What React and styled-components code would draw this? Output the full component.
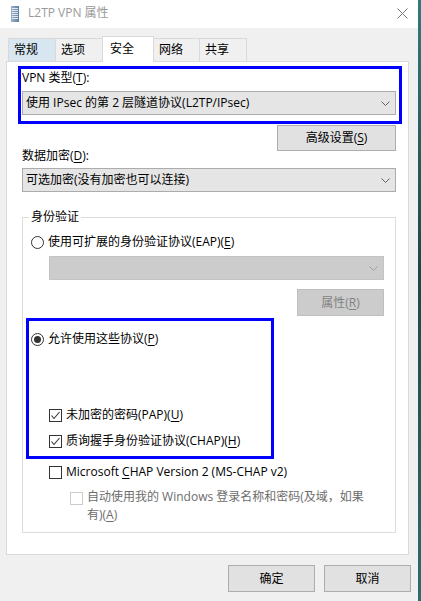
import styled, { createGlobalStyle } from "styled-components";

const GlobalStyle = createGlobalStyle`
  html, body { margin: 0; padding: 0; }
  body {
    background: linear-gradient(180deg, #2f7b7c 0%, #1c4748 45%, #2a6d6e 100%);
    font-family: "Open Sans", "Noto Sans CJK SC", sans-serif;
    font-size: 12px;
    color: #000;
  }
`;

const tabs = [
  { label: "常规", width: 48, hover: true },
  { label: "选项", width: 48 },
  { label: "安全", width: 52, active: true },
  { label: "网络", width: 47 },
  { label: "共享", width: 48 },
];

const Chevron = ({ color = "#606060" }) => (
  <svg width="9" height="5" viewBox="0 0 9 5">
    <polyline points="0.5,0.5 4.5,4.5 8.5,0.5" fill="none" stroke={color} strokeWidth="1" />
  </svg>
);

const Check = () => (
  <svg width="11" height="11" viewBox="0 0 11 11">
    <polyline points="1.5,5.5 4,8.5 9.5,2" fill="none" stroke="#333" strokeWidth="1.1" />
  </svg>
);

const App = () => {
  return (
    <>
      <GlobalStyle />
      <Window>
        <TitleBar>
          <svg width="8" height="16" viewBox="0 0 8 16">
            <defs>
              <linearGradient id="srv" x1="0" x2="1" y1="0" y2="0">
                <stop offset="0" stopColor="#9fb3cb" />
                <stop offset="1" stopColor="#5f7fa3" />
              </linearGradient>
            </defs>
            <rect x="0" y="0" width="8" height="16" fill="url(#srv)" />
            {[2, 4, 6, 8, 10, 12].map((y) => (
              <rect key={y} x="1" y={y} width="6" height="1" fill="#dfe7f0" />
            ))}
          </svg>
          <Title>L2TP VPN 属性</Title>
          <Close>
            <svg width="11" height="11" viewBox="0 0 11 11">
              <path d="M0.5 0.5 L10.5 10.5 M10.5 0.5 L0.5 10.5" stroke="#7a7a7a" strokeWidth="1" />
            </svg>
          </Close>
        </TitleBar>

        <Body>
          <TabStrip>
            {tabs.map((t) => (
              <Tab key={t.label} $width={t.width} $active={t.active} $hover={t.hover}>
                {t.label}
              </Tab>
            ))}
          </TabStrip>

          <Panel>
            <Highlight $top={-5} $left={-4} $right={-6} $bottom={-9}>
              <FieldLabel>
                VPN 类型(<Key>T</Key>):
              </FieldLabel>
              <Combo $gap={6}>
                <span>使用 IPsec 的第 2 层隧道协议(L2TP/IPsec)</span>
                <Chevron />
              </Combo>
            </Highlight>

            <ButtonRow $gap={10}>
              <Button $width={119} $height={26}>
                高级设置(<Key>S</Key>)
              </Button>
            </ButtonRow>

            <FieldLabel $gap={-2}>
              数据加密(<Key>D</Key>):
            </FieldLabel>
            <Combo $gap={5}>
              <span>可选加密(没有加密也可以连接)</span>
              <Chevron />
            </Combo>

            <Group>
              <GroupTitle>身份验证</GroupTitle>

              <Option $gap={0}>
                <Radio />
                <span>
                  使用可扩展的身份验证协议(EAP)(<Key>E</Key>)
                </span>
              </Option>
              <Combo $gap={6} $indent={18} $disabled>
                <span />
                <Chevron color="#a0a0a0" />
              </Combo>
              <ButtonRow $gap={9}>
                <Button $width={87} $height={27} $disabled>
                  属性(<Key>R</Key>)
                </Button>
              </ButtonRow>

              <Highlight $top={-13} $left={-5} $right={110} $bottom={-10} $gap={15}>
                <Option>
                  <Radio $checked />
                  <span>
                    允许使用这些协议(<Key>P</Key>)
                  </span>
                </Option>
                <Option $gap={60} $indent={18}>
                  <CheckBox>
                    <Check />
                  </CheckBox>
                  <span>
                    未加密的密码(PAP)(<Key>U</Key>)
                  </span>
                </Option>
                <Option $gap={10} $indent={18}>
                  <CheckBox>
                    <Check />
                  </CheckBox>
                  <span>
                    质询握手身份验证协议(CHAP)(<Key>H</Key>)
                  </span>
                </Option>
              </Highlight>

              <Option $gap={15} $indent={18}>
                <CheckBox />
                <span>
                  Microsoft <Key>C</Key>HAP Version 2 (MS-CHAP v2)
                </span>
              </Option>
              <WrapOption $gap={8} $indent={39}>
                <CheckBox $disabled />
                <OptionText $disabled>
                  自动使用我的 Windows 登录名称和密码(及域，如果
                  <br />
                  有)(<Key>A</Key>)
                </OptionText>
              </WrapOption>
            </Group>
          </Panel>

          <Footer>
            <Button $width={87} $height={27}>确定</Button>
            <Button $width={87} $height={27}>取消</Button>
          </Footer>
        </Body>
      </Window>
    </>
  );
};

export default App;

const Window = styled.div`
  width: 418px;
  height: 601px;
  background: #f0f0f0;
  display: flex;
  flex-direction: column;
  overflow: hidden;
`;

const TitleBar = styled.div`
  height: 28px;
  flex-shrink: 0;
  background: #fff;
  display: flex;
  align-items: center;
  padding: 0 10px 0 11px;
  box-sizing: border-box;
  gap: 9px;
`;

const Title = styled.span`
  color: #999;
  font-size: 12px;
  line-height: 16px;
  margin-top: -2px;
`;

const Close = styled.span`
  margin-left: auto;
  display: flex;
  margin-top: -2px;
`;

const Body = styled.div`
  padding: 8px 7px 0 6px;
  display: flex;
  flex-direction: column;
`;

const TabStrip = styled.div`
  display: flex;
  align-items: flex-end;
  height: 25px;
  padding-left: 2px;
  position: relative;
  z-index: 1;
`;

const Tab = styled.div`
  width: ${(p) => p.$width}px;
  height: ${(p) => (p.$active ? 26 : 23)}px;
  margin-bottom: ${(p) => (p.$active ? -1 : 0)}px;
  box-sizing: border-box;
  border: 1px solid #d9d9d9;
  border-bottom: none;
  margin-left: -1px;
  &:first-child { margin-left: 0; }
  background: ${(p) => (p.$active ? "#fff" : p.$hover ? "#d8e6f2" : "#f0f0f0")};
  position: relative;
  z-index: ${(p) => (p.$active ? 2 : 1)};
  display: flex;
  align-items: center;
  padding-left: ${(p) => (p.$active ? 7 : 5)}px;
  padding-bottom: ${(p) => (p.$active ? 2 : 0)}px;
  line-height: 16px;
`;

const Panel = styled.div`
  width: 403px;
  height: 494px;
  box-sizing: border-box;
  background: #fff;
  border: 1px solid #d9d9d9;
  padding: 9px 12px 0 15px;
  display: flex;
  flex-direction: column;
`;

const Highlight = styled.div`
  position: relative;
  margin-top: ${(p) => p.$gap || 0}px;
  &::after {
    content: "";
    position: absolute;
    top: ${(p) => p.$top}px;
    left: ${(p) => p.$left}px;
    right: ${(p) => p.$right}px;
    bottom: ${(p) => p.$bottom}px;
    border: 3px solid #0000ff;
    pointer-events: none;
  }
`;

const Key = styled.span`
  text-decoration: underline;
  text-underline-offset: 2px;
`;

const FieldLabel = styled.div`
  line-height: 14px;
  margin-top: ${(p) => p.$gap || 0}px;
`;

const Combo = styled.div`
  height: 24px;
  box-sizing: border-box;
  margin-top: ${(p) => p.$gap}px;
  margin-left: ${(p) => p.$indent || 0}px;
  background: ${(p) => (p.$disabled ? "#cccccc" : "#e5e5e5")};
  border: 1px solid ${(p) => (p.$disabled ? "#c4c4c4" : "#acacac")};
  display: flex;
  align-items: center;
  justify-content: space-between;
  padding: 0 5px 0 3px;
  line-height: 16px;
`;

const ButtonRow = styled.div`
  display: flex;
  justify-content: flex-end;
  margin-top: ${(p) => p.$gap}px;
`;

const Button = styled.div`
  width: ${(p) => p.$width}px;
  height: ${(p) => p.$height}px;
  box-sizing: border-box;
  display: flex;
  align-items: center;
  justify-content: center;
  background: ${(p) => (p.$disabled ? "#cccccc" : "#e1e1e1")};
  border: 1px solid ${(p) => (p.$disabled ? "#bfbfbf" : "#adadad")};
  color: ${(p) => (p.$disabled ? "#838383" : "#000")};
  line-height: 16px;
`;

const Group = styled.fieldset`
  margin: 18px 0 0 0;
  border: 1px solid #dcdcdc;
  padding: 10px 11px 8px 8px;
  min-width: 0;
  display: flex;
  flex-direction: column;
`;

const GroupTitle = styled.legend`
  padding: 0 2px;
  margin-left: -2px;
  line-height: 14px;
`;

const Option = styled.div`
  display: flex;
  align-items: center;
  gap: 4px;
  line-height: 16px;
  margin-top: ${(p) => p.$gap || 0}px;
  margin-left: ${(p) => p.$indent || 0}px;
`;

const WrapOption = styled(Option)`
  align-items: flex-start;
  line-height: 18px;
  & > span:first-child { margin-top: 4px; }
`;

const OptionText = styled.span`
  color: ${(p) => (p.$disabled ? "#6d6d6d" : "#000")};
`;

const Radio = styled.span`
  width: 13px;
  height: 13px;
  box-sizing: border-box;
  border-radius: 50%;
  border: 1px solid #333;
  background: #fff;
  flex-shrink: 0;
  display: flex;
  align-items: center;
  justify-content: center;
  &::after {
    content: "";
    display: ${(p) => (p.$checked ? "block" : "none")};
    width: 7px;
    height: 7px;
    border-radius: 50%;
    background: #333;
  }
`;

const CheckBox = styled.span`
  width: 13px;
  height: 13px;
  box-sizing: border-box;
  border: 1px solid ${(p) => (p.$disabled ? "#cccccc" : "#333")};
  background: #fff;
  flex-shrink: 0;
  display: flex;
  align-items: center;
  justify-content: center;
`;

const Footer = styled.div`
  display: flex;
  justify-content: flex-end;
  gap: 9px;
  margin-top: 10px;
`;
